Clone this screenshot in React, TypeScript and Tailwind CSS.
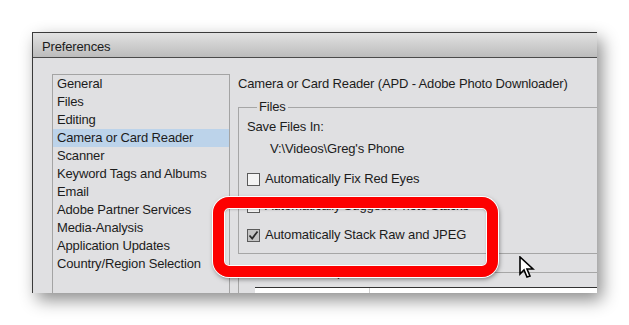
const categories = [
  "General",
  "Files",
  "Editing",
  "Camera or Card Reader",
  "Scanner",
  "Keyword Tags and Albums",
  "Email",
  "Adobe Partner Services",
  "Media-Analysis",
  "Application Updates",
  "Country/Region Selection",
];

function CheckBox({ checked }: { checked?: boolean }) {
  return (
    <span
      className={
        "flex h-[13px] w-[13px] shrink-0 items-center justify-center border border-[#5a5a5a] " +
        (checked ? "bg-[#c4c4c4]" : "bg-[#f4f4f4]")
      }
    >
      {checked && (
        <svg width="11" height="11" viewBox="0 0 11 11">
          <path d="M1.5 5.5 L4.2 8.5 L9.5 1.5" fill="none" stroke="#2a2a2a" strokeWidth="1.8" />
        </svg>
      )}
    </span>
  );
}

function Cursor() {
  return (
    <svg className="absolute left-[519px] top-[256px]" width="16" height="24" viewBox="0 0 16 24">
      <path
        d="M1 1 L1 18 L5 14 L8 21 L11 20 L8 13 L14 13 Z"
        fill="#fff"
        stroke="#000"
        strokeWidth="1.6"
        strokeLinejoin="miter"
      />
    </svg>
  );
}

export default function App() {
  return (
    <div
      className="relative h-[325px] w-[629px] overflow-hidden bg-white pl-[32px] pt-[32px] text-[13px] leading-[18px] tracking-[-0.15px] text-[#1c1c1c]"
      style={{ fontFamily: '"Liberation Sans", Arial, sans-serif' }}
    >
      <div className="flex h-[261px] w-[565px] flex-col overflow-hidden border-l border-t border-[#3a3a3a] bg-[#e0e0e2] shadow-[5px_7px_16px_rgba(0,0,0,0.45)]">
        {/* title bar */}
        <div className="flex h-[25px] shrink-0 items-center border-b border-[#4a4a4a] bg-linear-to-b from-[#e2e2e2] to-[#bcbcbc] pl-[9px] pt-[4px] text-[13px]">
          Preferences
        </div>

        <div className="flex min-h-0 flex-1 pl-[19px] pt-[16px]">
          {/* category list */}
          <div className="w-[178px] shrink-0 border border-b-0 border-[#a4a4a4] bg-[#e0e0e2]">
            {categories.map((c) => (
              <div
                key={c}
                className={"h-[18px] pl-[4px] " + (c === "Camera or Card Reader" ? "bg-[#bcd3ea]" : "")}
              >
                {c}
              </div>
            ))}
          </div>

          {/* settings pane */}
          <div className="ml-[8px] flex min-w-0 flex-1 flex-col">
            <div className="h-[18px] pt-[1px]">Camera or Card Reader (APD - Adobe Photo Downloader)</div>

            <fieldset className="mt-[6px] w-[400px] shrink-0 border border-[#a6a6a6] pb-[9px] pl-[8px]">
              <legend className="ml-[10px] px-[2px] leading-[18px]">Files</legend>
              <div className="mt-[2px] h-[18px]">Save Files In:</div>
              <div className="mt-[4px] h-[18px] pl-[23px]">V:\Videos\Greg's Phone</div>
              <div className="mt-[12px] flex h-[18px] items-center gap-[5px]">
                <CheckBox />
                <span>Automatically Fix Red Eyes</span>
              </div>
              <div className="mt-[9px] flex h-[18px] items-center gap-[5px]">
                <CheckBox />
                <span>Automatically Suggest Photo Stacks</span>
              </div>
              <div className="mt-[11px] flex h-[18px] items-center gap-[5px]">
                <CheckBox checked />
                <span>Automatically Stack Raw and JPEG</span>
              </div>
            </fieldset>

            <fieldset className="mt-[9px] h-[80px] w-[400px] shrink-0 border border-[#a6a6a6] pl-[16px]">
              <legend className="ml-[10px] px-[2px] leading-[18px]">Download Options</legend>
              <div className="mt-[6px] flex h-[40px] w-[360px] border-t border-[#333] bg-white">
                <div className="w-[115px] border-r border-[#cfcfcf]" />
              </div>
            </fieldset>
          </div>
        </div>
      </div>

      {/* red highlight */}
      <div className="absolute left-[213px] top-[197px] h-[80px] w-[285px] rounded-[16px] border-[11px] border-[#fd0000] shadow-[0_0_0_1px_#ffffff,1px_2px_5px_rgba(0,0,0,0.5),inset_0_0_0_1px_#ffffff,inset_0_1px_3px_rgba(0,0,0,0.35)]" />

      <Cursor />
    </div>
  );
}
